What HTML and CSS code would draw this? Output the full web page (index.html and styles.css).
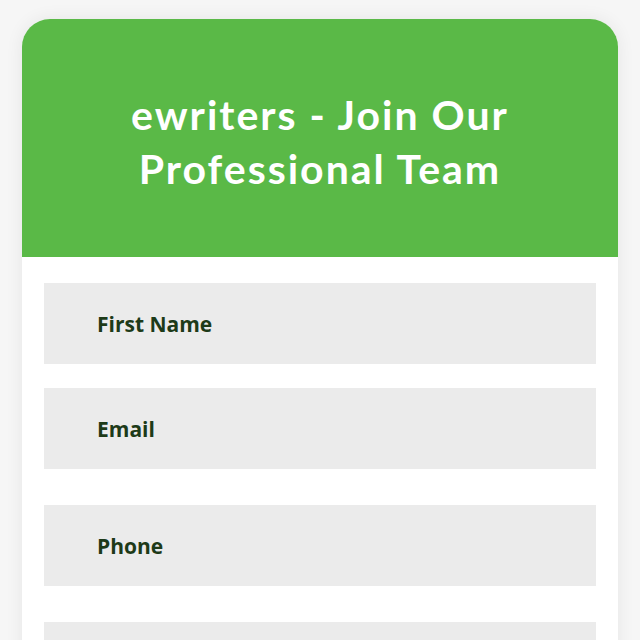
FILE: index.html
```html
<!DOCTYPE html>
<html>
<head>
<meta charset="utf-8">
<link rel="stylesheet" href="styles.css">
</head>
<body>
<div class="page">
  <div class="card">
    <div class="header">
      <h1 class="title">ewriters - Join Our Professional Team</h1>
    </div>
    <form class="form">
      <div class="field"><span class="label">First Name</span></div>
      <div class="field gap-small"><span class="label">Email</span></div>
      <div class="field"><span class="label">Phone</span></div>
      <div class="field"><span class="label">&nbsp;</span></div>
    </form>
  </div>
</div>
</body>
</html>
```

FILE: styles.css
```css
html, body {
  margin: 0;
  padding: 0;
  height: 100%;
  overflow: hidden;
}
body {
  background: #f6f6f6;
  font-family: "Open Sans", "Noto Sans", sans-serif;
}
.page {
  padding: 19px 22px 0 22px;
}
.card {
  background: #ffffff;
  border-radius: 28px 28px 0 0;
  box-shadow: 0 0 18px rgba(0, 0, 0, 0.07);
  overflow: hidden;
  height: 640px;
}
.header {
  background: #5ab947;
  height: 238px;
  display: flex;
  align-items: center;
  justify-content: center;
}
.title {
  margin: 0;
  color: #ffffff;
  font-family: "Lato", "Open Sans", sans-serif;
  font-weight: 700;
  font-size: 41px;
  line-height: 54px;
  letter-spacing: 2px;
  text-align: center;
  width: 460px;
  padding-top: 8px;
}
.form {
  display: flex;
  flex-direction: column;
  padding: 26px 22px 0 22px;
  gap: 36px;
}
.field {
  background: #ebebeb;
  height: 81px;
  display: flex;
  align-items: center;
  padding-left: 53px;
}
.gap-small {
  margin-top: -12px;
}
.label {
  color: #1d3a18;
  font-family: "Open Sans", sans-serif;
  font-weight: 700;
  font-size: 21px;
  padding-top: 1px;
}
```
